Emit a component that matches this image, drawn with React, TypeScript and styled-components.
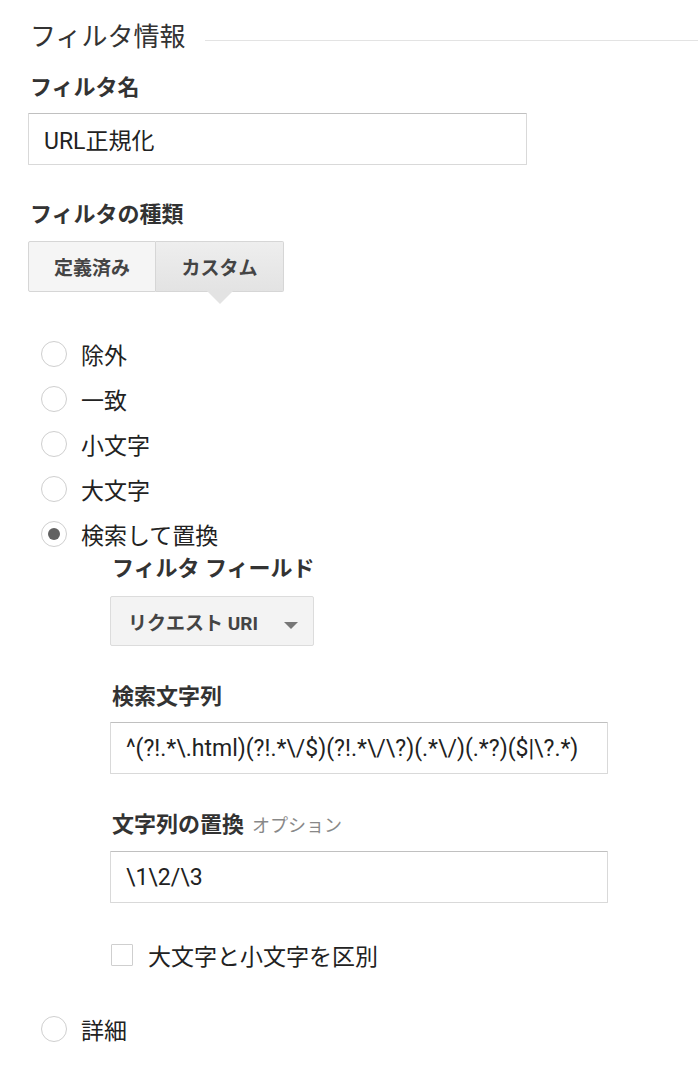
import styled, { createGlobalStyle } from "styled-components";

const GlobalStyle = createGlobalStyle`
    body {
        margin: 0;
        background: #fff;
        font-family: Roboto, "Noto Sans CJK JP", sans-serif;
        color: #222;
    }
`;

const Page = styled.div`
    padding: 22px 0 40px 28px;
`;

const TitleRow = styled.div`
    display: flex;
    align-items: center;
    gap: 20px;
`;

const Title = styled.h2`
    margin: 0 0 0 2px;
    font-size: 26px;
    line-height: 30px;
    font-weight: 400;
    color: #333;
`;

const Rule = styled.div`
    flex: 1;
    height: 1px;
    margin-top: 6px;
    background: #e3e3e3;
`;

const Label = styled.div<{ $top: number }>`
    margin-top: ${p => p.$top}px;
    margin-left: 2px;
    font-size: 22px;
    line-height: 26px;
    font-weight: 700;
    color: #333;
`;

const Hint = styled.span`
    margin-left: 8px;
    font-size: 18px;
    font-weight: 400;
    color: #888;
`;

const TextInput = styled.input<{ $width: number }>`
    display: block;
    box-sizing: border-box;
    width: ${p => p.$width}px;
    height: 52px;
    margin-top: 12px;
    padding: 0 15px;
    border: 1px solid #d9d9d9;
    border-top-color: #c0c0c0;
    border-radius: 1px;
    font-family: Roboto, "Noto Sans CJK JP", sans-serif;
    font-size: 23px;
    color: #222;
    background: #fff;
    outline: none;
`;

const Segmented = styled.div`
    display: flex;
    margin-top: 13px;
`;

const Segment = styled.button<{ $active?: boolean }>`
    position: relative;
    width: 128px;
    height: 51px;
    border: 1px solid #d6d6d6;
    background: ${p => (p.$active ? "linear-gradient(#eeeeee, #e3e3e3)" : "#f5f5f5")};
    font-family: Roboto, "Noto Sans CJK JP", sans-serif;
    font-size: 19px;
    font-weight: 700;
    color: #444;
    padding: 0;
    &:first-child {
        border-radius: 2px 0 0 2px;
    }
    &:last-child {
        border-left: none;
        border-radius: 0 2px 2px 0;
    }
    ${p => p.$active && `
        &::after {
            content: "";
            position: absolute;
            left: 50%;
            bottom: -13px;
            margin-left: -13px;
            border-left: 13px solid transparent;
            border-right: 13px solid transparent;
            border-top: 13px solid #e3e3e3;
        }
    `}
`;

const RadioList = styled.div`
    margin-top: 39px;
    padding-left: 13px;
`;

const RadioRow = styled.label<{ $top?: number }>`
    display: flex;
    align-items: center;
    gap: 14px;
    height: 45px;
    margin-top: ${p => p.$top ?? 0}px;
    font-size: 23px;
    color: #222;
`;

const RadioCircle = styled.span<{ $checked?: boolean }>`
    box-sizing: border-box;
    width: 26px;
    height: 26px;
    border-radius: 50%;
    border: 1px solid #cfcfcf;
    display: flex;
    align-items: center;
    justify-content: center;
    &::after {
        content: "";
        width: 12px;
        height: 12px;
        border-radius: 50%;
        background: ${p => (p.$checked ? "#616161" : "transparent")};
    }
`;

const SubSection = styled.div`
    padding-left: 69px;
`;

const Dropdown = styled.div`
    box-sizing: border-box;
    display: flex;
    align-items: center;
    justify-content: space-between;
    width: 204px;
    height: 50px;
    margin-top: 14px;
    padding: 0 15px 0 17px;
    border: 1px solid #dcdcdc;
    border-radius: 2px;
    background: #f3f3f3;
    font-size: 19px;
    font-weight: 700;
    color: #444;
`;

const Caret = styled.span`
    width: 0;
    height: 0;
    margin-top: 8px;
    border-left: 7px solid transparent;
    border-right: 7px solid transparent;
    border-top: 7px solid #777;
`;

const CheckRow = styled.label`
    display: flex;
    align-items: center;
    gap: 15px;
    height: 30px;
    margin-top: 37px;
    padding-left: 1px;
    font-size: 23px;
    color: #222;
`;

const CheckBox = styled.span`
    box-sizing: border-box;
    width: 22px;
    height: 22px;
    border: 1px solid #cfcfcf;
    border-radius: 1px;
`;

const types = ["除外", "一致", "小文字", "大文字"];

export default function App() {
    return (
        <Page>
            <GlobalStyle />
            <TitleRow>
                <Title>フィルタ情報</Title>
                <Rule />
            </TitleRow>

            <Label $top={23}>フィルタ名</Label>
            <TextInput $width={499} readOnly value="URL正規化" />

            <Label $top={37}>フィルタの種類</Label>
            <Segmented>
                <Segment>定義済み</Segment>
                <Segment $active>カスタム</Segment>
            </Segmented>

            <RadioList>
                {types.map(t => (
                    <RadioRow key={t}>
                        <RadioCircle />
                        {t}
                    </RadioRow>
                ))}
                <RadioRow>
                    <RadioCircle $checked />
                    検索して置換
                </RadioRow>
                <SubSection>
                    <Label $top={0}>フィルタ フィールド</Label>
                    <Dropdown>
                        リクエスト URI
                        <Caret />
                    </Dropdown>

                    <Label $top={38}>検索文字列</Label>
                    <TextInput $width={498} readOnly value={"^(?!.*\\.html)(?!.*\\/$)(?!.*\\/\\?)(.*\\/)(.*?)($|\\?.*)"} />

                    <Label $top={38}>
                        文字列の置換<Hint>オプション</Hint>
                    </Label>
                    <TextInput $width={498} readOnly value={"\\1\\2/\\3"} />

                    <CheckRow>
                        <CheckBox />
                        大文字と小文字を区別
                    </CheckRow>
                </SubSection>
                <RadioRow $top={36}>
                    <RadioCircle />
                    詳細
                </RadioRow>
            </RadioList>
        </Page>
    );
}
